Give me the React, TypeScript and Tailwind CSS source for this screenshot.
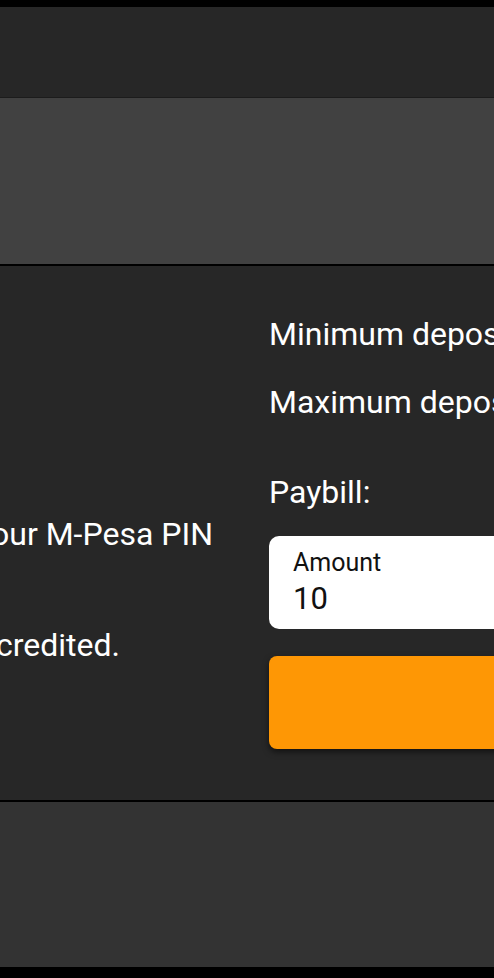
import React from 'react';

const App: React.FC = () => {
  return (
    <div className="min-h-[978px] w-full bg-black overflow-hidden font-['Roboto',sans-serif] text-white">
      {/* Top bar */}
      <div className="h-[7px] bg-black" />
      <header className="h-[91px] bg-[#272727] border-b border-[#1c1c1c]" />

      {/* Banner */}
      <div className="h-[166px] bg-[#414141]" />
      <div className="h-[2px] bg-black" />

      {/* Deposit panel */}
      <main className="h-[534px] bg-[#272727] flex">
        <div className="w-[269px] shrink-0 overflow-hidden pt-[244px] text-[32px] leading-[48px]">
          <p className="whitespace-nowrap -ml-[9px]">our M-Pesa PIN</p>
          <p className="whitespace-nowrap -ml-[4px] mt-[63px]">credited.</p>
        </div>

        <div className="flex-1 min-w-0 pt-[44px] text-[32px] leading-[48px]">
          <p className="whitespace-nowrap">Minimum deposit</p>
          <p className="whitespace-nowrap mt-[20px]">Maximum deposit</p>
          <p className="whitespace-nowrap mt-[42px]">Paybill:</p>

          <label className="mt-[20px] h-[93px] w-[260px] rounded-[10px] bg-white pl-[24px] pt-[12px] flex flex-col text-[#111]">
            <span className="text-[25px] leading-[29px]">Amount</span>
            <span className="mt-[3px] text-[31px] leading-[37px]">10</span>
          </label>

          <button className="mt-[27px] h-[93px] w-[260px] rounded-[8px] bg-[#fe9705] shadow-[0_3px_6px_rgba(0,0,0,0.55)]" />
        </div>
      </main>

      <div className="h-[2px] bg-black" />
      {/* Footer */}
      <footer className="h-[165px] bg-[#333333]" />
      <div className="h-[11px] bg-black" />
    </div>
  );
};

export default App;
